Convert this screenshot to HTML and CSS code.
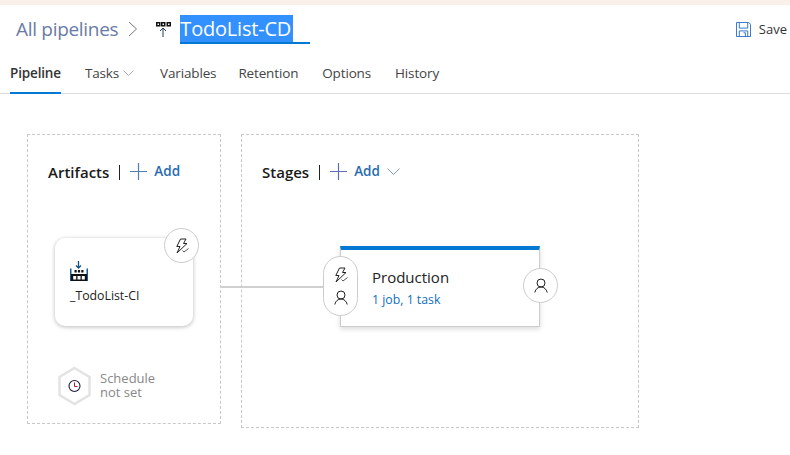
FILE: index.html
```html
<!DOCTYPE html>
<html lang="en">

<head>
  <meta charset="UTF-8">
  <meta name="viewport" content="width=device-width, initial-scale=1.0">
  <title>TodoList-CD</title>
  <link rel="stylesheet" href="styles.css">
</head>

<body>
  <div class="topStrip"></div>

  <header class="titleBar">
    <a class="crumb">All pipelines</a>
    <svg class="crumbSep" width="10" height="16" viewBox="0 0 10 16"><path d="M1 1l7.500 7L1 15" fill="none" stroke="#777" stroke-width="1"/></svg>
    <svg class="pipeIcon" width="15" height="16" viewBox="0 0 15 16">
      <path d="M0 1h4.500v4.500H0zM5 1h4.500v4.500H5zM10.500 1H15v4.500h-4.500z" fill="#111"/>
      <path d="M1.500 2.500h1.500V4H1.500zM6.500 2.500H8V4H6.500zM12 2.500h1.500V4H12z" fill="#fff"/>
      <path d="M7 16V7.500M4 10l3-3 3 3" fill="none" stroke="#1b3a5c" stroke-width="1"/>
    </svg>
    <div class="nameField"><span class="nameSel">TodoList-CD</span></div>
    <button class="saveBtn">
      <svg width="15" height="15" viewBox="0 0 16 16" fill="none" stroke="#2b6fc4" stroke-width="1">
        <path d="M.5.500h13l2 2v13H.500z"/>
        <path d="M3.500.500v6h9v-6M3.500 15.500v-6h9v6M8 11.500h2v4"/>
      </svg>
      Save
    </button>
  </header>

  <nav class="tabs">
    <a class="tab active">Pipeline</a>
    <a class="tab tabTasks">Tasks
      <svg width="11" height="6" viewBox="0 0 11 6"><path d="M.5.500l5 5 5-5" fill="none" stroke="#aaa" stroke-width="1"/></svg>
    </a>
    <a class="tab tabVariables">Variables</a>
    <a class="tab">Retention</a>
    <a class="tab">Options</a>
    <a class="tab">History</a>
  </nav>

  <main class="canvas">
    <section class="panel artifacts">
      <div class="panelHead">
        <h2>Artifacts</h2>
        <span class="divider"></span>
        <a class="addLink">
          <svg width="17" height="17" viewBox="0 0 17 17"><path d="M8.500 0v17M0 8.500h17" stroke="#4f7fb5" stroke-width="1.200"/></svg>
          Add
        </a>
      </div>

      <div class="artifactCard">
        <svg class="buildIcon" width="18" height="20" viewBox="0 0 18 20">
          <path d="M8.500 0v6.500M6 4.500l2.500 2.500L11 4.500" fill="none" stroke="#14517f" stroke-width="1.300"/>
          <path d="M0 7.500h1.500V20H0zM16.500 7.500H18V20h-1.500z" fill="#0f5f9c"/>
          <path d="M1 13h16v7H1zM4.500 9h2.200v2.500H4.500zM7.900 9h2.200v2.500H7.900zM11.300 9h2.200v2.500h-2.200z" fill="#111"/>
          <path d="M3.200 15h3v3.500h-3zM7.500 15h3v3.500h-3zM11.800 15h3v3.500h-3z" fill="#fff"/>
        </svg>
        <div class="artifactName">_TodoList-CI</div>
        <div class="roundBtn cardTrigger">
          <svg width="16" height="16" viewBox="0 0 16 16" fill="none" stroke="#222" stroke-width="1"><path d="M6.500 1h5.500L9.500 5.500H13L3 15l3-6.500H2.800z"/><path d="M8.500 12.500l1.500 1.500 4.500-3.500" stroke="#555"/></svg>
        </div>
      </div>

      <div class="schedule">
        <svg width="36" height="40" viewBox="0 0 36 40">
          <path d="M17.500 2l15 9v18l-15 9-15-9V11z" fill="#fff" stroke="#e3e3e3" stroke-width="2.500"/>
          <circle cx="17.500" cy="20" r="5.500" fill="none" stroke="#1d1d3a" stroke-width="1.100"/>
          <path d="M17.500 16.500v4h3" fill="none" stroke="#a3203c" stroke-width="1"/>
        </svg>
        <span class="scheduleText">Schedule<br>not set</span>
      </div>
    </section>

    <div class="connector"></div>

    <section class="panel stages">
      <div class="panelHead">
        <h2>Stages</h2>
        <span class="divider"></span>
        <a class="addLink">
          <svg width="17" height="17" viewBox="0 0 17 17"><path d="M8.500 0v17M0 8.500h17" stroke="#5f6fb5" stroke-width="1.200"/></svg>
          Add
        </a>
        <svg class="addCaret" width="13" height="7" viewBox="0 0 13 7"><path d="M.5.500l6 6 6-6" fill="none" stroke="#7f9cc0" stroke-width="1"/></svg>
      </div>

      <div class="stageCard">
        <div class="stageName">Production</div>
        <a class="stageJobs">1 job, 1 task</a>
        <div class="pill">
          <svg width="16" height="16" viewBox="0 0 16 16" fill="none" stroke="#222" stroke-width="1"><path d="M6.500 1h5.500L9.500 5.500H13L3 15l3-6.500H2.800z"/><path d="M8.500 12.500l1.500 1.500 4.500-3.500" stroke="#555"/></svg>
          <svg width="14" height="15" viewBox="0 0 14 15" fill="none" stroke="#222" stroke-width="1"><circle cx="7" cy="5" r="4"/><path d="M.8 14.500C1.500 11 4 9 7 9s5.500 2 6.200 5.500"/></svg>
        </div>
        <div class="roundBtn stageApprover">
          <svg width="14" height="15" viewBox="0 0 14 15" fill="none" stroke="#222" stroke-width="1"><circle cx="7" cy="5" r="4"/><path d="M.8 14.500C1.500 11 4 9 7 9s5.500 2 6.200 5.500"/></svg>
        </div>
      </div>
    </section>
  </main>
</body>

</html>
```

FILE: styles.css
```css
* {
  box-sizing: border-box;
}

body {
  margin: 0;
  height: 455px;
  overflow: hidden;
  background: #fff;
  color: #222;
  font-family: "Open Sans", "Noto Sans", sans-serif;
}

h2 {
  margin: 0;
  font-size: 15px;
  font-weight: 600;
  color: #1a1a1a;
}

.topStrip {
  height: 5px;
  background: #f9f0ea;
}

/* barra do titulo */
.titleBar {
  display: flex;
  align-items: center;
  height: 48px;
  padding-left: 16px;
}

.crumb {
  font-size: 19px;
  letter-spacing: -0.3px;
  color: #6a7ba6;
}

.crumbSep {
  margin-left: 10px;
}

.pipeIcon {
  margin-left: 18px;
}

.nameField {
  width: 130px;
  margin-left: 9px;
  border-bottom: 2px solid #0078d4;
}

.nameSel {
  display: block;
  width: 113px;
  height: 27px;
  background: #3390ff;
  color: #fff;
  font-size: 20px;
  line-height: 27px;
  letter-spacing: -0.2px;
}

.saveBtn {
  display: flex;
  align-items: center;
  gap: 8px;
  margin-left: auto;
  padding: 0 3px 0 0;
  border: 0;
  background: none;
  color: #333;
  font-family: inherit;
  font-size: 13px;
}

/* abas */
.tabs {
  display: flex;
  gap: 24px;
  height: 41px;
  padding-left: 10px;
  border-bottom: 1px solid #ddd;
}

.tab {
  display: flex;
  align-items: center;
  gap: 4px;
  height: 41px;
  padding-bottom: 1px;
  font-size: 13.5px;
  letter-spacing: -0.15px;
  color: #444;
}

.tab.active {
  border-bottom: 2px solid #0078d4;
  padding-bottom: 0;
  font-weight: 600;
  color: #333;
}

.tabTasks {
  margin-right: 2px;
}

.tabVariables {
  margin-right: -2px;
}

/* area do diagrama */
.canvas {
  position: relative;
  display: flex;
  align-items: flex-start;
  gap: 20px;
  padding: 40px 0 0 27px;
}

.panel {
  position: relative;
  border: 1px dashed #c8c8c8;
}

.artifacts {
  width: 194px;
  height: 290px;
}

.stages {
  width: 398px;
  height: 294px;
}

.panelHead {
  display: flex;
  align-items: center;
  height: 20px;
  margin: 27px 0 0 20px;
}

.divider {
  width: 1px;
  height: 15px;
  margin: 0 10px 0 10px;
  background: #222;
}

.addLink {
  display: flex;
  align-items: center;
  gap: 7px;
  margin-top: -2px;
  font-size: 13.5px;
  font-weight: 600;
  color: #2a6cb0;
}

.addCaret {
  margin: -2px 0 0 7px;
}

.artifactCard {
  position: absolute;
  left: 27px;
  top: 103px;
  width: 138px;
  height: 88px;
  padding: 23px 0 0 15px;
  border-radius: 10px;
  background: #fff;
  box-shadow: 0 1px 4px rgba(0, 0, 0, 0.28);
}

.buildIcon {
  display: block;
}

.artifactName {
  margin-top: 6px;
  font-size: 12.3px;
  color: #222;
}

.roundBtn {
  position: absolute;
  display: flex;
  align-items: center;
  justify-content: center;
  width: 35px;
  height: 35px;
  border: 1px solid #ccc;
  border-radius: 50%;
  background: #fff;
}

.cardTrigger {
  right: -6px;
  top: -10px;
}

.schedule {
  position: absolute;
  left: 29px;
  top: 231px;
  display: flex;
  align-items: center;
  gap: 7px;
}

.scheduleText {
  margin-top: -2px;
  font-size: 13px;
  line-height: 14px;
  color: #888;
}

.connector {
  position: absolute;
  left: 220px;
  top: 192px;
  width: 104px;
  height: 2px;
  background: #d0d0d0;
}

.stageCard {
  position: absolute;
  left: 98px;
  top: 111px;
  width: 200px;
  height: 81px;
  padding: 17px 0 0 31px;
  border: 1px solid #ccc;
  border-top: 4px solid #0078d4;
  background: #fff;
  box-shadow: 0 2px 5px rgba(0, 0, 0, 0.15);
}

.stageName {
  font-size: 15px;
  line-height: 20px;
  color: #222;
}

.stageJobs {
  font-size: 12.3px;
  color: #106ebe;
}

.pill {
  position: absolute;
  left: -18px;
  top: 6px;
  display: flex;
  flex-direction: column;
  align-items: center;
  justify-content: center;
  gap: 7px;
  width: 35px;
  height: 60px;
  border: 1px solid #ccc;
  border-radius: 18px;
  background: #fff;
}

.stageApprover {
  right: -19px;
  top: 18px;
}
```
